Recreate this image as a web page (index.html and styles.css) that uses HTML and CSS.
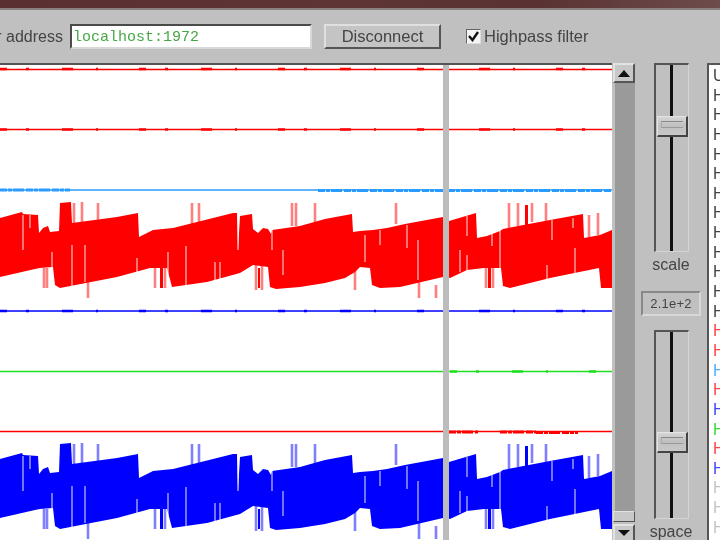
FILE: index.html
```html
<!DOCTYPE html>
<html lang="en">
<head>
    <meta charset="UTF-8">
    <title>Signal viewer</title>
    <link rel="stylesheet" href="styles.css">
</head>
<body>
    <div class="window">
        <div class="titlebar"></div>

        <div class="toolbar">
            <div class="address-label"><span>Server address</span></div>
            <input class="address" type="text" value="localhost:1972">
            <button class="connect">Disconnect</button>
            <div class="checkbox">
                <svg width="11" height="11" viewBox="0 0 11 11"><path d="M1 5 L4.5 9 L10 1" fill="none" stroke="#111" stroke-width="2.4"/></svg>
            </div>
            <div class="check-label">Highpass filter</div>
        </div>

        <div class="main">
            <div class="plot">
                <svg class="traces" width="612" height="475" viewBox="0 65 612 475">
                    <defs>
                        <g id="wave">
                            <polygon fill="currentColor" points="0,218 22,212 23,214 38,215 39,233 43,228 48,226 50,232 59,231 60,203 71,202 72,223 117,217 138,213 139,237 153,230 173,228 233,213 237,213 238,250 240,216 252,214 253,229 258,233 263,228 268,229 271,234 272,230 300,226 325,219 352,214 353,232 360,231 373,230 387,228 405,224 443,217 449,221 476,213 477,238 487,236 500,231 503,229 550,220 583,214 584,238 600,235 612,230 612,288 601,288 599,268 550,278 510,288 503,286 501,268 495,268 484,268 467,270 450,278 447,277 443,277 400,287 380,288 372,285 370,268 360,267 355,272 345,278 325,283 300,287 276,289 270,287 268,267 253,265 240,273 207,282 172,287 167,268 153,268 150,268 117,277 60,288 55,285 53,267 40,268 35,269 0,277"/>
                            <path fill="currentColor" d="M525 205h3v20h-3z M488 268h3v20h-3z M258 268h2v20h-2z M160 268h3v20h-3z"/>
                            <path class="spikes" d="M74 203V223 M82 202V222 M98 203V220 M192 203V228 M199 203V228 M292 203V226 M296 203V226 M315 203V222 M396 203V224 M509 203V228 M518 203V226 M532 203V222 M546 203V222 M589 215V237 M598 213V235
                                M44 268V288 M47 268V288 M88 280V298 M155 268V288 M165 268V288 M256 265V290 M262 265V290 M355 270V290 M419 280V298 M436 285V298 M486 268V288 M493 268V288"/>
                            <path class="notches" d="M23 215V250 M30 215V228 M72 245V288 M85 245V282 M52 252V270 M137 258V272 M186 246V285 M168 252V275 M215 262V280 M220 262V280 M238 215V250 M272 218V250 M283 250V275 M284 215V228 M407 225V248 M418 240V280 M460 250V272 M467 216V236 M467 255V275 M492 230V246 M500 220V268 M552 220V240 M547 265V280 M573 218V228 M575 248V278 M365 235V262 M380 230V245"/>
                        </g>
                    </defs>

                    <path class="line red" d="M0 69.5H612"/>
                    <path class="blotch red" d="M0 69H612"/>
                    <path class="line red" d="M0 129.5H612"/>
                    <path class="blotch red" d="M0 129.5H612"/>
                    <path class="line sky" d="M0 190H612"/>
                    <path class="thick sky" d="M0 190H70 M318 190.5H612"/>

                    <use href="#wave" class="red"/>

                    <path class="line blue" d="M0 311H612"/>
                    <path class="blotch blue" d="M0 311H612"/>
                    <path class="line green" d="M0 371.5H612"/>
                    <path class="blotch green" d="M450 371.5H612"/>
                    <path class="line red" d="M0 431.5H612"/>
                    <path class="thick red" d="M449 432H478 M500 432H536 M536 432.5H578"/>

                    <use href="#wave" class="blue" y="241"/>

                    <rect class="cursor" x="443" y="65" width="6" height="475"/>
                </svg>
            </div>

            <div class="scrollbar">
                <div class="scroll-btn"><div class="arrow-up"></div></div>
                <div class="scroll-track"></div>
                <div class="scroll-thumb"></div>
                <div class="scroll-btn down"><div class="arrow-down"></div></div>
            </div>

            <div class="controls">
                <div class="slider">
                    <div class="groove"></div>
                    <div class="thumb scale-thumb"></div>
                </div>
                <div class="slider-label">scale</div>
                <div class="value">2.1e+2</div>
                <div class="slider second">
                    <div class="groove"></div>
                    <div class="thumb space-thumb"></div>
                </div>
                <div class="slider-label">space</div>
            </div>

            <div class="channels">
                <div class="channel">U</div>
                <div class="channel">H</div>
                <div class="channel">H</div>
                <div class="channel">H</div>
                <div class="channel">H</div>
                <div class="channel">H</div>
                <div class="channel">H</div>
                <div class="channel">H</div>
                <div class="channel">H</div>
                <div class="channel">H</div>
                <div class="channel">H</div>
                <div class="channel">H</div>
                <div class="channel">H</div>
                <div class="channel c-red">H</div>
                <div class="channel c-red">H</div>
                <div class="channel c-sky">H</div>
                <div class="channel c-red">H</div>
                <div class="channel c-blue">H</div>
                <div class="channel c-green">H</div>
                <div class="channel c-red">H</div>
                <div class="channel c-blue">H</div>
                <div class="channel c-off">H</div>
                <div class="channel c-off">H</div>
                <div class="channel c-off">H</div>
            </div>
        </div>
    </div>
</body>
</html>
```

FILE: styles.css
```css
html, body {
    margin: 0;
    height: 100%;
    overflow: hidden;
    background-color: #c0c0c0;
}

.window {
    width: 720px;
    height: 540px;
    display: flex;
    flex-direction: column;
    overflow: hidden;
    background-color: #c0c0c0;
    font-family: "Liberation Sans", Arial, sans-serif;
    color: #444;
    filter: blur(0.7px);
}

.titlebar {
    height: 8px;
    flex: none;
    background: linear-gradient(90deg, #5a3030 0%, #5e3434 50%, #5a3232 75%, #6e4c4c 100%);
    border-bottom: 2px solid #8a8080;
}

.toolbar {
    height: 53px;
    flex: none;
    display: flex;
    align-items: center;
    box-sizing: border-box;
    font-size: 16.5px;
}

.address-label {
    width: 63px;
    flex: none;
    display: flex;
    justify-content: flex-end;
    overflow: hidden;
    white-space: nowrap;
    font-size: 16px;
}

.address {
    width: 242px;
    height: 25px;
    margin: 0 0 0 7px;
    padding: 1px 0 0 1px;
    box-sizing: border-box;
    background-color: white;
    color: #45a845;
    font-family: "Liberation Mono", monospace;
    font-size: 15px;
    border-style: solid;
    border-width: 2px;
    border-color: #4a4a4a #d8d8d8 #d8d8d8 #4a4a4a;
    outline: none;
}

.connect {
    width: 117px;
    height: 25px;
    margin-left: 12px;
    padding: 0;
    box-sizing: border-box;
    background-color: #c4c4c4;
    color: #444;
    font-family: inherit;
    font-size: 16.5px;
    border-style: solid;
    border-width: 2px;
    border-color: #e0e0e0 #555 #555 #e0e0e0;
}

.checkbox {
    width: 15px;
    height: 15px;
    margin-left: 25px;
    box-sizing: border-box;
    display: flex;
    align-items: center;
    justify-content: center;
    background-color: #f4f4f4;
    border-style: solid;
    border-width: 1px;
    border-color: #666 #ddd #ddd #666;
}

.check-label {
    margin-left: 3px;
}

.main {
    flex: 1;
    display: flex;
    min-height: 0;
}

.plot {
    width: 612px;
    flex: none;
    border-top: 2px solid #555;
    background-color: white;
    overflow: hidden;
}

.traces {
    display: block;
}

.line, .blotch, .thick {
    fill: none;
    stroke: currentColor;
}

.line { stroke-width: 1.7; }
.blotch { stroke-width: 2.4; stroke-dasharray: 7 19 3 33 11 23 2 41; }
.thick { stroke-width: 3; stroke-dasharray: 7 1 4 1 11 2; }

.spikes {
    fill: none;
    stroke: currentColor;
    stroke-opacity: 0.5;
    stroke-width: 2.6;
}

.notches {
    fill: none;
    stroke: white;
    stroke-opacity: 0.5;
    stroke-width: 1.8;
}

.red { color: #f00; }
.blue { color: #00f; }
.green { color: #1ee01e; }
.sky { color: #2a9bff; }

.cursor { fill: #bcbcbc; }

.scrollbar {
    width: 23px;
    flex: none;
    display: flex;
    flex-direction: column;
    background-color: #c0c0c0;
}

.scroll-btn {
    height: 20px;
    flex: none;
    box-sizing: border-box;
    margin-left: 1px;
    display: flex;
    align-items: center;
    justify-content: center;
    background-color: #c8c8c8;
    border-style: solid;
    border-width: 2px;
    border-color: #e2e2e2 #555 #555 #e2e2e2;
}

.scroll-btn.down {
    height: 16px;
    border-bottom: none;
    margin-top: 2px;
}

.arrow-up {
    width: 0;
    height: 0;
    border-left: 6px solid transparent;
    border-right: 6px solid transparent;
    border-bottom: 7px solid #111;
}

.arrow-down {
    width: 0;
    height: 0;
    border-left: 6px solid transparent;
    border-right: 6px solid transparent;
    border-top: 6px solid #111;
}

.scroll-track {
    flex: 1;
    margin-left: 3px;
    background-color: #9a9a9a;
}

.scroll-thumb {
    height: 11px;
    flex: none;
    margin-left: 1px;
    box-sizing: border-box;
    background-color: #c8c8c8;
    border-style: solid;
    border-width: 1px;
    border-color: #e2e2e2 #555 #555 #e2e2e2;
}

.controls {
    width: 72px;
    flex: none;
    display: flex;
    flex-direction: column;
    align-items: center;
}

.slider {
    width: 35px;
    height: 189px;
    flex: none;
    position: relative;
    box-sizing: border-box;
    display: flex;
    justify-content: center;
    border-style: solid;
    border-width: 2px 1px 1px 2px;
    border-color: #555 #d4d4d4 #d4d4d4 #555;
}

.slider.second {
    margin-top: 14px;
}

.groove {
    width: 3px;
    height: 100%;
    background-color: #111;
    margin-right: 1px;
}

.thumb {
    position: absolute;
    left: 1px;
    width: 31px;
    height: 21px;
    box-sizing: border-box;
    background: linear-gradient(#d6d6d6, #c0c0c0 45%, #c8c8c8);
    border-style: solid;
    border-width: 1px 2px 2px 1px;
    border-color: #e4e4e4 #444 #444 #e4e4e4;
}

.thumb::after {
    content: "";
    position: absolute;
    left: 3px;
    right: 3px;
    top: 4px;
    height: 5px;
    border-top: 1px solid #888;
    border-bottom: 1px solid #999;
    border-left: 1px solid #aaa;
}

.scale-thumb { top: 51px; }
.space-thumb { top: 100px; }

.slider-label {
    height: 24px;
    line-height: 24px;
    margin-top: 1px;
    flex: none;
    font-size: 16px;
}

.value {
    width: 60px;
    height: 25px;
    line-height: 21px;
    margin-top: 14px;
    flex: none;
    box-sizing: border-box;
    text-align: center;
    font-size: 13px;
    letter-spacing: 0.2px;
    border-style: solid;
    border-width: 2px;
    border-color: #888 #d8d8d8 #d8d8d8 #888;
}

.channels {
    flex: 1;
    min-width: 0;
    box-sizing: border-box;
    padding: 1px 0 0 4px;
    background-color: white;
    overflow: hidden;
    border-top: 2px solid #555;
    border-left: 2px solid #555;
    font-size: 16px;
}

.channel {
    height: 19.65px;
    line-height: 19.65px;
}

.c-red { color: #f44; }
.c-blue { color: #44f; }
.c-sky { color: #4ab0ff; }
.c-green { color: #33e033; }
.c-off { color: #c4c4c4; }
```
